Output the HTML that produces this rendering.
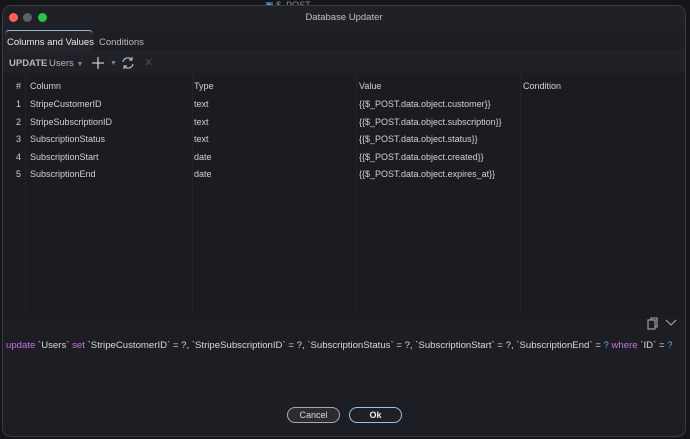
<!DOCTYPE html>
<html><head><style>
body{margin:0;width:690px;height:439px;background:#15161a;font-family:"Liberation Sans",sans-serif;font-size:9px;color:#d0d2d8;position:relative;overflow:hidden}
.win{position:absolute;left:2px;top:5px;width:682px;height:430px;background:#1c1e24;border:1px solid #3a3c42;border-radius:9px;overflow:hidden}
.abs{position:absolute}
.dot{position:absolute;top:7px;width:9px;height:9px;border-radius:50%}
.col{position:absolute;top:67px;width:1px;height:240px;background:#222429}
.row{position:absolute;left:0;width:682px;height:17px}
.row span{position:absolute;top:4px}
</style></head><body>
<div class="abs" style="left:255px;top:0;color:#8a8c92;font-size:9px">⌄ <span style="color:#6aa8e0">▣</span> $_POST</div>
<div class="win">
 <div class="abs" style="left:0;top:0;width:682px;height:23px;background:#1f2127"></div>
 <div class="dot" style="left:6px;background:#fe5f57"></div>
 <div class="dot" style="left:20px;background:#5e6065"></div>
 <div class="dot" style="left:35px;background:#28c840"></div>
 <div class="abs" style="left:0;top:6px;width:682px;text-align:center;color:#c0c2c8;font-size:9.5px">Database Updater</div>
 <div class="abs" style="left:0;top:23px;width:682px;height:23px;background:#1d1f25;border-bottom:1px solid #25272d"></div>
 <div class="abs" style="left:2px;top:24px;width:88px;height:22px;background:#23252b;border-top:1px solid #9ab4d8;border-radius:4px 4px 0 0"></div>
 <div class="abs" style="left:4px;top:31px;color:#e8e9ec;font-size:9.5px">Columns and Values</div>
 <div class="abs" style="left:96px;top:31px;color:#b8bac0;font-size:9.5px">Conditions</div>
 <div class="abs" style="left:0;top:47px;width:682px;height:20px;background:#1f2127"></div>
 <div class="abs" style="left:6px;top:52px;color:#b8bac0;font-size:9.5px;font-weight:bold">UPDATE</div>
 <div class="abs" style="left:46px;top:52px;color:#b8bac0;font-size:9.5px">Users <span style="color:#7a86a8;font-size:7px">▼</span></div>
 <svg class="abs" style="left:89px;top:51px" width="12" height="12" viewBox="0 0 12 12" stroke="#c8cad0" stroke-width="1.3"><path d="M6 0v12M0 6h12"/></svg>
 <div class="abs" style="left:107px;top:54px;color:#7a86a8;font-size:7px">▼</div>
 <svg class="abs" style="left:118px;top:50px" width="14" height="14" viewBox="0 0 14 14" fill="none" stroke="#b0b2b8" stroke-width="1.2"><path d="M2 6a5 5 0 0 1 9-2M12 8a5 5 0 0 1-9 2M11 1v3H8M3 13v-3h3"/></svg>
 <div class="abs" style="left:141px;top:50px;color:#4a4c52;font-size:11px">✕</div>
 <div class="abs" style="left:0;top:67px;width:682px;height:245px;background:#1a1c21"></div>
 <div class="col" style="left:22px"></div><div class="col" style="left:189px"></div><div class="col" style="left:353px"></div><div class="col" style="left:517px"></div>
 <div class="row" style="top:71px"><span style="left:13px">#</span><span style="left:27px">Column</span><span style="left:191px">Type</span><span style="left:356px">Value</span><span style="left:520px">Condition</span></div>
 <div class="row" style="top:89px"><span style="left:13px">1</span><span style="left:27px">StripeCustomerID</span><span style="left:191px">text</span><span style="left:356px">{{$_POST.data.object.customer}}</span></div>
 <div class="row" style="top:107px"><span style="left:13px">2</span><span style="left:27px">StripeSubscriptionID</span><span style="left:191px">text</span><span style="left:356px">{{$_POST.data.object.subscription}}</span></div>
 <div class="row" style="top:124px"><span style="left:13px">3</span><span style="left:27px">SubscriptionStatus</span><span style="left:191px">text</span><span style="left:356px">{{$_POST.data.object.status}}</span></div>
 <div class="row" style="top:142px"><span style="left:13px">4</span><span style="left:27px">SubscriptionStart</span><span style="left:191px">date</span><span style="left:356px">{{$_POST.data.object.created}}</span></div>
 <div class="row" style="top:159px"><span style="left:13px">5</span><span style="left:27px">SubscriptionEnd</span><span style="left:191px">date</span><span style="left:356px">{{$_POST.data.object.expires_at}}</span></div>
 <svg class="abs" style="left:644px;top:311px" width="12" height="13" viewBox="0 0 12 13" fill="none" stroke="#a8aab0" stroke-width="1.1"><rect x="1" y="3" width="7" height="9"/><path d="M4 3V1h6v9H8"/></svg>
 <svg class="abs" style="left:662px;top:313px" width="12" height="8" viewBox="0 0 12 8" fill="none" stroke="#a8aab0" stroke-width="1.1"><path d="M1 1l5 5 5-5"/></svg>
 <div class="abs" style="left:3px;top:334px;font-size:9.6px;white-space:nowrap;color:#d8dae0"><span style="color:#c678dd">update</span> `Users` <span style="color:#c678dd">set</span> `StripeCustomerID` = ?, `StripeSubscriptionID` = ?, `SubscriptionStatus` = ?, `SubscriptionStart` = ?, `SubscriptionEnd` = <span style="color:#61afef">?</span> <span style="color:#c678dd">where</span> `ID` = <span style="color:#61afef">?</span></div>
 <div class="abs" style="left:284px;top:401px;width:51px;height:14px;border:1px solid #a8aab0;border-radius:8px;background:#2a2c32;text-align:center;line-height:14px;font-size:9px;color:#d8dae0">Cancel</div>
 <div class="abs" style="left:346px;top:401px;width:51px;height:14px;border:1px solid #8ec8f0;border-radius:8px;background:#1e2026;text-align:center;line-height:14px;font-size:9px;font-weight:bold;color:#eceef2">Ok</div>
</div>
</body></html>
